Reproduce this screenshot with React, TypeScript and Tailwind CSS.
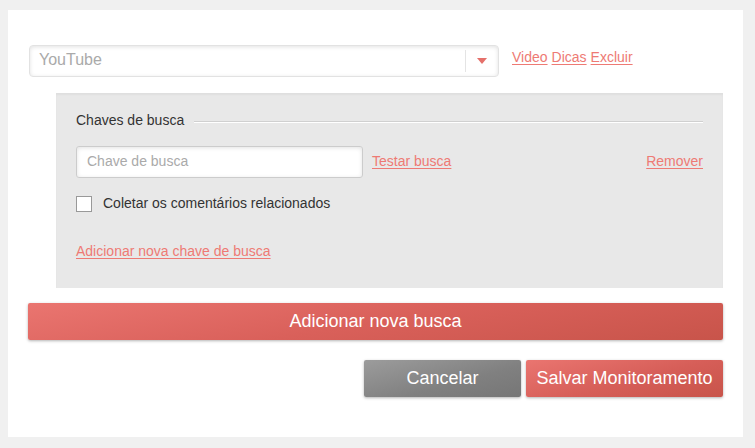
const linkCls =
  "text-[14px] text-[#ee7a74] underline underline-offset-[2px] decoration-[#ee7a74]";

export default function App() {
  return (
    <div
      className="w-[755px] h-[448px] bg-[#f0f0f0] pt-[10px] pl-[8px]"
      style={{ fontFamily: '"Liberation Sans", Arial, sans-serif' }}
    >
      <div className="w-[735px] h-[427px] bg-white pt-[35px]">
        {/* source select */}
        <div className="flex items-center ml-[21px]">
          <div className="flex items-center w-[470px] h-[32px] rounded-[4px] border border-[#e2e2e2] bg-white shadow-[inset_0_1px_4px_rgba(0,0,0,0.12)]">
            <span className="flex-1 pl-[9px] pb-[3px] text-[16px] text-[#aaaaaa]">YouTube</span>
            <div className="h-[22px] w-px bg-[#e4e4e4]" />
            <div className="w-[32px] flex justify-center">
              <svg width="10" height="6" viewBox="0 0 10 6">
                <path d="M0 0h10L5 6z" fill="#e5706a" />
              </svg>
            </div>
          </div>
          <div className="ml-[13px] flex gap-[4px] -mt-[8px]">
            <a className={linkCls}>Video</a>
            <a className={linkCls}>Dicas</a>
            <a className={linkCls}>Excluir</a>
          </div>
        </div>

        {/* keys panel */}
        <div className="ml-[48px] mt-[16px] w-[667px] h-[195px] bg-[#e8e8e8] shadow-[inset_0_2px_2px_rgba(0,0,0,0.04)] px-[20px] pt-[17px]">
          <div className="flex items-center">
            <span className="text-[14px] text-[#333333]">Chaves de busca</span>
            <div className="flex-1 ml-[10px] mt-[3px] h-[2px] border-t border-[#d0d0d0] border-b border-b-white" />
          </div>
          <div className="flex items-center mt-[15px]">
            <div className="w-[287px] h-[32px] rounded-[3px] border border-[#cccccc] bg-white shadow-[inset_0_1px_4px_rgba(0,0,0,0.12)] flex items-center pl-[10px] pb-[2px]">
              <span className="text-[14px] text-[#aaaaaa]">Chave de busca</span>
            </div>
            <a className={`${linkCls} ml-[9px] -mt-[2px]`}>Testar busca</a>
            <a className={`${linkCls} ml-auto -mt-[2px]`}>Remover</a>
          </div>
          <label className="flex items-center mt-[15px]">
            <span className="w-[16px] h-[16px] border border-[#999999] bg-white" />
            <span className="ml-[11px] text-[14px] text-[#333333]">
              Coletar os comentários relacionados
            </span>
          </label>
          <div className="mt-[25px]">
            <a className={linkCls}>Adicionar nova chave de busca</a>
          </div>
        </div>

        {/* add search */}
        <button className="ml-[20px] mt-[15px] w-[695px] h-[37px] rounded-[2px] bg-[linear-gradient(170deg,#ea7570_0%,#d9605a_50%,#c8544a_100%)] shadow-[0_1px_3px_rgba(0,0,0,0.3)] text-white text-[18px]">
          Adicionar nova busca
        </button>

        <div className="flex justify-end gap-[5px] mt-[20px] mr-[20px]">
          <button className="w-[157px] h-[37px] rounded-[2px] bg-[linear-gradient(165deg,#9c9c9c_0%,#808080_60%,#767676_100%)] shadow-[0_1px_3px_rgba(0,0,0,0.3)] text-white text-[18px]">
            Cancelar
          </button>
          <button className="w-[197px] h-[37px] rounded-[2px] bg-[linear-gradient(165deg,#ea7570_0%,#d65e58_55%,#c8544a_100%)] shadow-[0_1px_3px_rgba(0,0,0,0.3)] text-white text-[18px]">
            Salvar Monitoramento
          </button>
        </div>
      </div>
    </div>
  );
}
